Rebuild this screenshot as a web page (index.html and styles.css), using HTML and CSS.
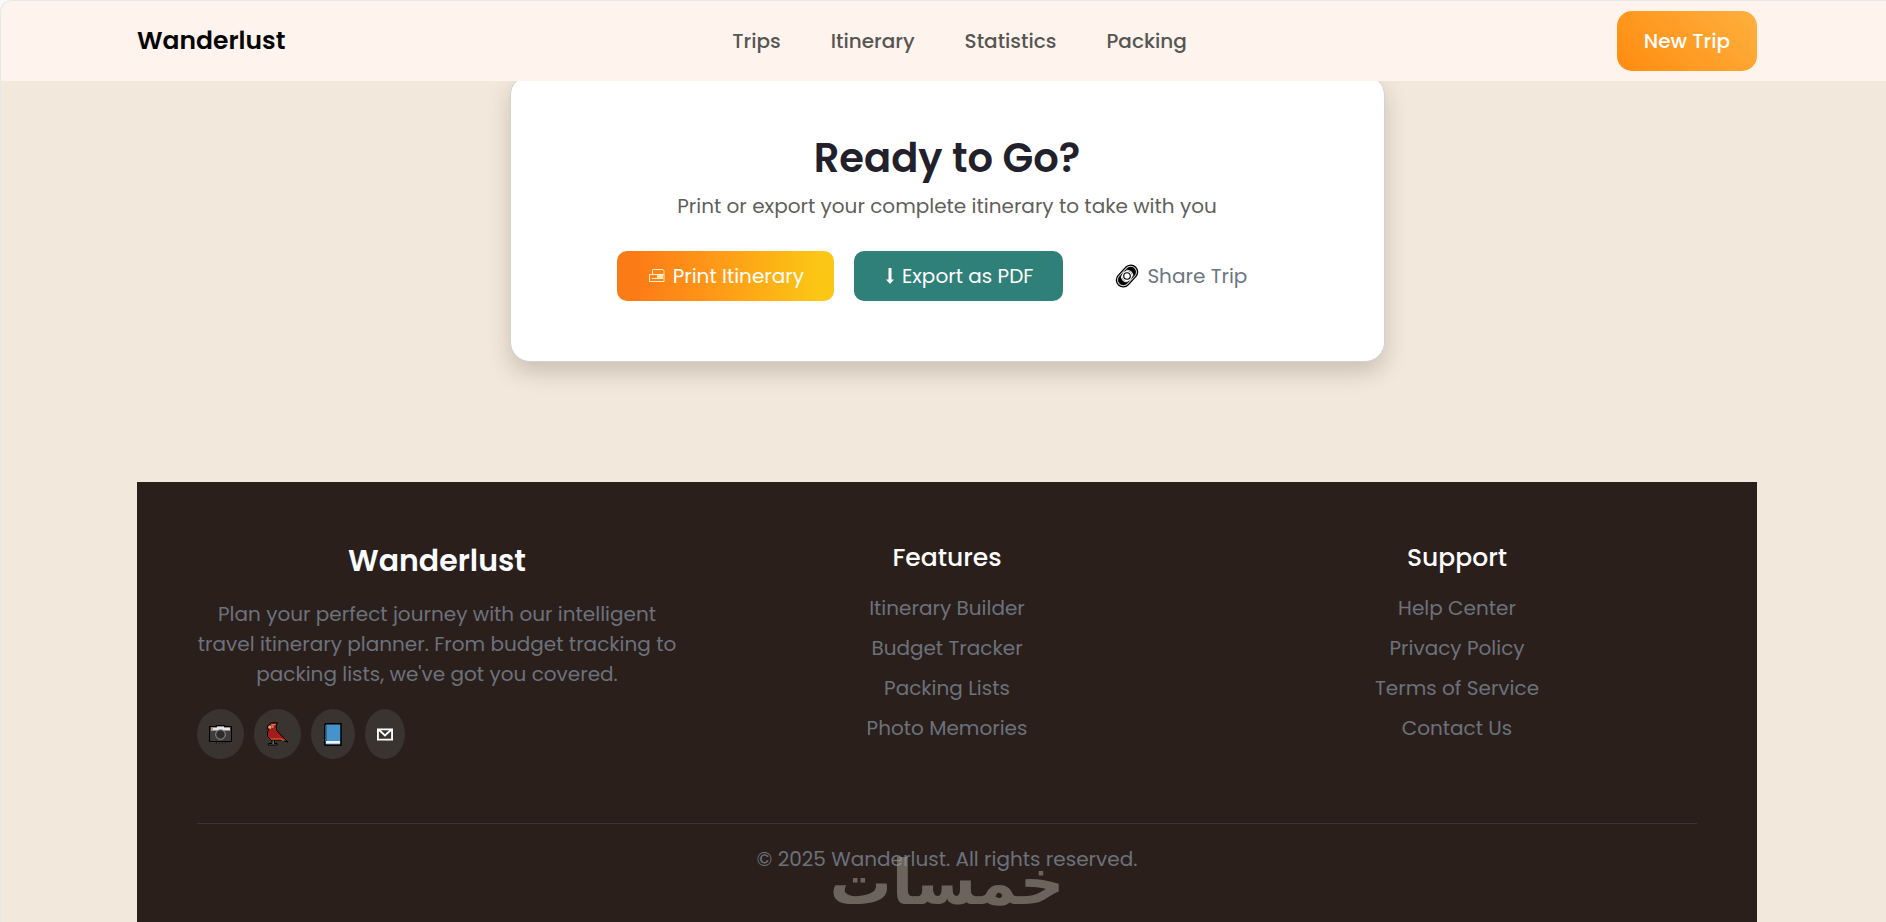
FILE: index.html
```html
<!DOCTYPE html>
<html lang="en">
<head>
<meta charset="utf-8">
<meta name="viewport" content="width=device-width, initial-scale=1">
<title>Wanderlust</title>
<link rel="stylesheet" href="styles.css">
</head>
<body>
<div class="page">
  <header class="topbar">
    <div class="logo">Wanderlust</div>
    <nav class="nav">
      <a href="#trips">Trips</a>
      <a href="#itinerary">Itinerary</a>
      <a href="#statistics">Statistics</a>
      <a href="#packing">Packing</a>
    </nav>
    <button class="new-trip" type="button">New Trip</button>
  </header>

  <main class="main">
    <section class="card">
      <h1 class="card-title">Ready to Go?</h1>
      <p class="card-text">Print or export your complete itinerary to take with you</p>
      <div class="actions">
        <button class="btn btn-print" type="button">
          <svg class="icon-print" viewBox="0 0 16 14" fill="none" stroke="#ffeccb" aria-hidden="true"><path d="M3.500 5.500V.5H14l1 1.500v10.500H.5v-7h14.500M3 9.500h5"/><path d="M8 6h6v4H8z" fill="#ffe9b8" stroke="none"/></svg>
          <span>Print Itinerary</span>
        </button>
        <button class="btn btn-export" type="button">
          <svg class="icon-down" viewBox="0 0 8 16" fill="#fff" aria-hidden="true"><path d="M2.500 0h3v11.500H8L4 16 0 11.500h2.500z"/></svg>
          <span>Export as PDF</span>
        </button>
        <button class="btn btn-share" type="button">
          <svg class="icon-link" viewBox="0 0 24 24" fill="none" aria-hidden="true">
            <g transform="rotate(-47 12 12)">
              <rect x="-1" y="4.500" width="26" height="15" rx="7.500" fill="#000"/>
              <rect x=".8" y="6.200" width="22.400" height="11.600" rx="5.800" stroke="#d8d8d8"/>
              <path d="M8.500 7.500a5.500 5.500 0 0 0 0 9M15.500 7.500a5.500 5.500 0 0 1 0 9" stroke="#eee"/>
            </g>
            <circle cx="12" cy="12" r="4.500" fill="#000" stroke="#fff" stroke-width="1.300"/>
            <circle cx="12" cy="12" r="2.700" fill="#fff"/>
          </svg>
          <span>Share Trip</span>
        </button>
      </div>
    </section>
  </main>

  <footer class="footer">
    <div class="footer-grid">
      <section class="about">
        <h2 class="footer-logo">Wanderlust</h2>
        <p class="about-text">Plan your perfect journey with our intelligent travel itinerary planner. From budget tracking to packing lists, we've got you covered.</p>
        <div class="socials">
          <a class="social" href="#photos" aria-label="Photos">
            <svg class="icon-camera" viewBox="0 0 23 20" aria-hidden="true"><path d="M.5 2.500h7v-1h8v1h7v15H.5z" fill="#3f3a3b" stroke="#000"/><path d="M2 3.500h6v-1h7v1h6v3H2z" fill="#e8e6e4"/><path d="M2 4h2v2H2z" fill="#e98b4a"/><circle cx="11.500" cy="10.500" r="4.800" fill="#2e2b2c" stroke="#9a9696"/><path d="M7 19h1m2 0h1m2 0h1m2 0h1" stroke="#111"/></svg>
          </a>
          <a class="social" href="#feed" aria-label="Feed">
            <svg class="icon-bird" viewBox="0 0 23 24" aria-hidden="true"><path d="M6 18v3.500H2.500V23H11v-1.500H8.500V18" fill="#6d6764" stroke="#000"/><path d="M11.500.8H5.500L2 3.500 1 6.500l2 1L1.500 10v4.500L5 18h11l6 2.200L11 9l-1-4.500z" fill="#a61b1b" stroke="#000"/><path d="M5.500 2H10L9 3.500H5zM4 16.500h11l4 2-2.500.2-1.500-1.200H5z" fill="#ee6a2c"/><path d="M3 3.500l2 .5v3L2 6z" fill="#f7a541"/><circle cx="6.500" cy="4.800" r="1.300" fill="#8d8e98"/></svg>
          </a>
          <a class="social" href="#journal" aria-label="Journal">
            <svg class="icon-book" viewBox="0 0 18 23" aria-hidden="true"><path d="M2 .8h15v21.400H1.500l-.7-1V2z" fill="#4592cc" stroke="#000" stroke-width="1.500"/><path d="M1.500 2.500h1.500V18H1.500z" fill="#2e6d80"/><path d="M2 18h14v3H2z" fill="#f2f4f8"/><path d="M2 20.500h14" stroke="#b9c6e5"/></svg>
          </a>
          <a class="social" href="#mail" aria-label="Mail">
            <svg class="icon-mail" viewBox="0 0 17 13" fill="none" stroke="#fff" stroke-width="2" aria-hidden="true"><path d="M1 1h15v11H1z"/><path d="M2 1.500l6.500 6 6.500-6"/></svg>
          </a>
        </div>
      </section>
      <section class="links">
        <h3 class="links-title">Features</h3>
        <a href="#builder">Itinerary Builder</a>
        <a href="#budget">Budget Tracker</a>
        <a href="#lists">Packing Lists</a>
        <a href="#memories">Photo Memories</a>
      </section>
      <section class="links">
        <h3 class="links-title">Support</h3>
        <a href="#help">Help Center</a>
        <a href="#privacy">Privacy Policy</a>
        <a href="#terms">Terms of Service</a>
        <a href="#contact">Contact Us</a>
      </section>
    </div>
    <div class="legal">
      <p class="copyright">© 2025 Wanderlust. All rights reserved.</p>
      <span class="watermark" lang="ar" dir="rtl">خمسات</span>
    </div>
  </footer>
</div>
</body>
</html>
```
FILE: styles.css
```css
* {
  box-sizing: border-box;
}

body {
  margin: 0;
  background: #f7fafa;
  font-family: Poppins, Inter, "Open Sans", sans-serif;
  font-size: 20px;
  line-height: 30px;
}

h1, h2, h3, p {
  margin: 0;
}

a {
  color: inherit;
  text-decoration: none;
}

button {
  border: 0;
  font: inherit;
  cursor: pointer;
}

svg {
  display: block;
  flex: none;
}

.page {
  display: flex;
  flex-direction: column;
  min-height: 100vh;
  border: 1px solid #e6e8e8;
  border-width: 1px 0 0 1px;
  border-radius: 12px 0 0 0;
  background: #f3e8dc;
  overflow: hidden;
}

.topbar {
  position: relative;
  z-index: 1;
  display: grid;
  grid-template-columns: 1fr auto 1fr;
  align-items: center;
  padding: 10px 129px 10px 136px;
  background: #fff3ed;
}

.logo {
  color: #060606;
  font-size: 25px;
  font-weight: 600;
}

.nav {
  display: flex;
  gap: 50px;
  padding-left: 25px;
  color: #565652;
  font-weight: 500;
}

.new-trip {
  justify-self: end;
  padding: 15px 27px;
  border-radius: 15px;
  background: linear-gradient(45deg, #ff8c0f, #ffb03f);
  color: #fff;
  font-weight: 500;
}

.main {
  padding: 0 129px 120px 136px;
}

.card {
  max-width: 875px;
  margin: -6px auto 0;
  padding: 57px 40px 60px;
  border: 1px solid #d3d2d2;
  border-radius: 20px;
  background: #fff;
  box-shadow: 0 10px 22px rgba(60, 50, 35, 0.22);
  text-align: center;
}

.card-title {
  color: #22212b;
  font-size: 40px;
  font-weight: 600;
  line-height: 50px;
}

.card-text {
  margin-top: 8px;
  color: #5f5f5b;
}

.actions {
  display: flex;
  flex-wrap: wrap;
  justify-content: center;
  gap: 20px;
  margin-top: 30px;
}

.btn {
  display: flex;
  align-items: center;
  gap: 8px;
  padding: 10px 30px 10px 32px;
  border-radius: 10px;
  color: #fff;
}

.btn-print {
  background: linear-gradient(90deg, #fb7b16 8%, #ff9618 42%, #fbc614 92%);
}

.btn-export {
  background: #2f8079;
}

.btn-share {
  background: transparent;
  color: #6c7680;
}

.icon-print {
  width: 16px;
  height: 14px;
}

.icon-down {
  width: 8px;
  height: 16px;
}

.icon-link {
  width: 24px;
  height: 24px;
}

.footer {
  flex: 1;
  margin: 0 129px 0 136px;
  padding: 61px 60px 44px;
  background: #2b1f1c;
  color: #6b727c;
  text-align: center;
}

.footer-grid {
  display: grid;
  grid-template-columns: repeat(3, 1fr);
  gap: 30px;
}

.footer-logo {
  color: #fafcff;
  font-size: 30px;
  font-weight: 600;
  line-height: 36px;
}

.about-text {
  margin-top: 20px;
}

.socials {
  display: flex;
  gap: 10px;
  margin-top: 20px;
}

.social {
  display: flex;
  align-items: center;
  height: 50px;
  padding: 0 12px;
  border-radius: 50%;
  background: #3a3431;
}

.icon-camera {
  width: 23px;
  height: 20px;
}

.icon-bird {
  width: 23px;
  height: 24px;
}

.icon-book {
  width: 20px;
  height: 23px;
}

.icon-mail {
  width: 16px;
  height: 13px;
}

.links {
  display: flex;
  flex-direction: column;
  align-items: center;
  gap: 10px;
}

.links-title {
  margin-bottom: 10px;
  color: #fff;
  font-size: 25px;
  font-weight: 500;
}

.legal {
  position: relative;
  margin-top: 64px;
  padding-top: 20px;
  border-top: 1px solid #3d3330;
}

.watermark {
  position: absolute;
  top: 24px;
  left: 50%;
  transform: translateX(-50%);
  opacity: 0.55;
  color: #a09b91;
  font-family: "DejaVu Sans", sans-serif;
  font-size: 62px;
  font-weight: 700;
  line-height: 70px;
  pointer-events: none;
}
```
